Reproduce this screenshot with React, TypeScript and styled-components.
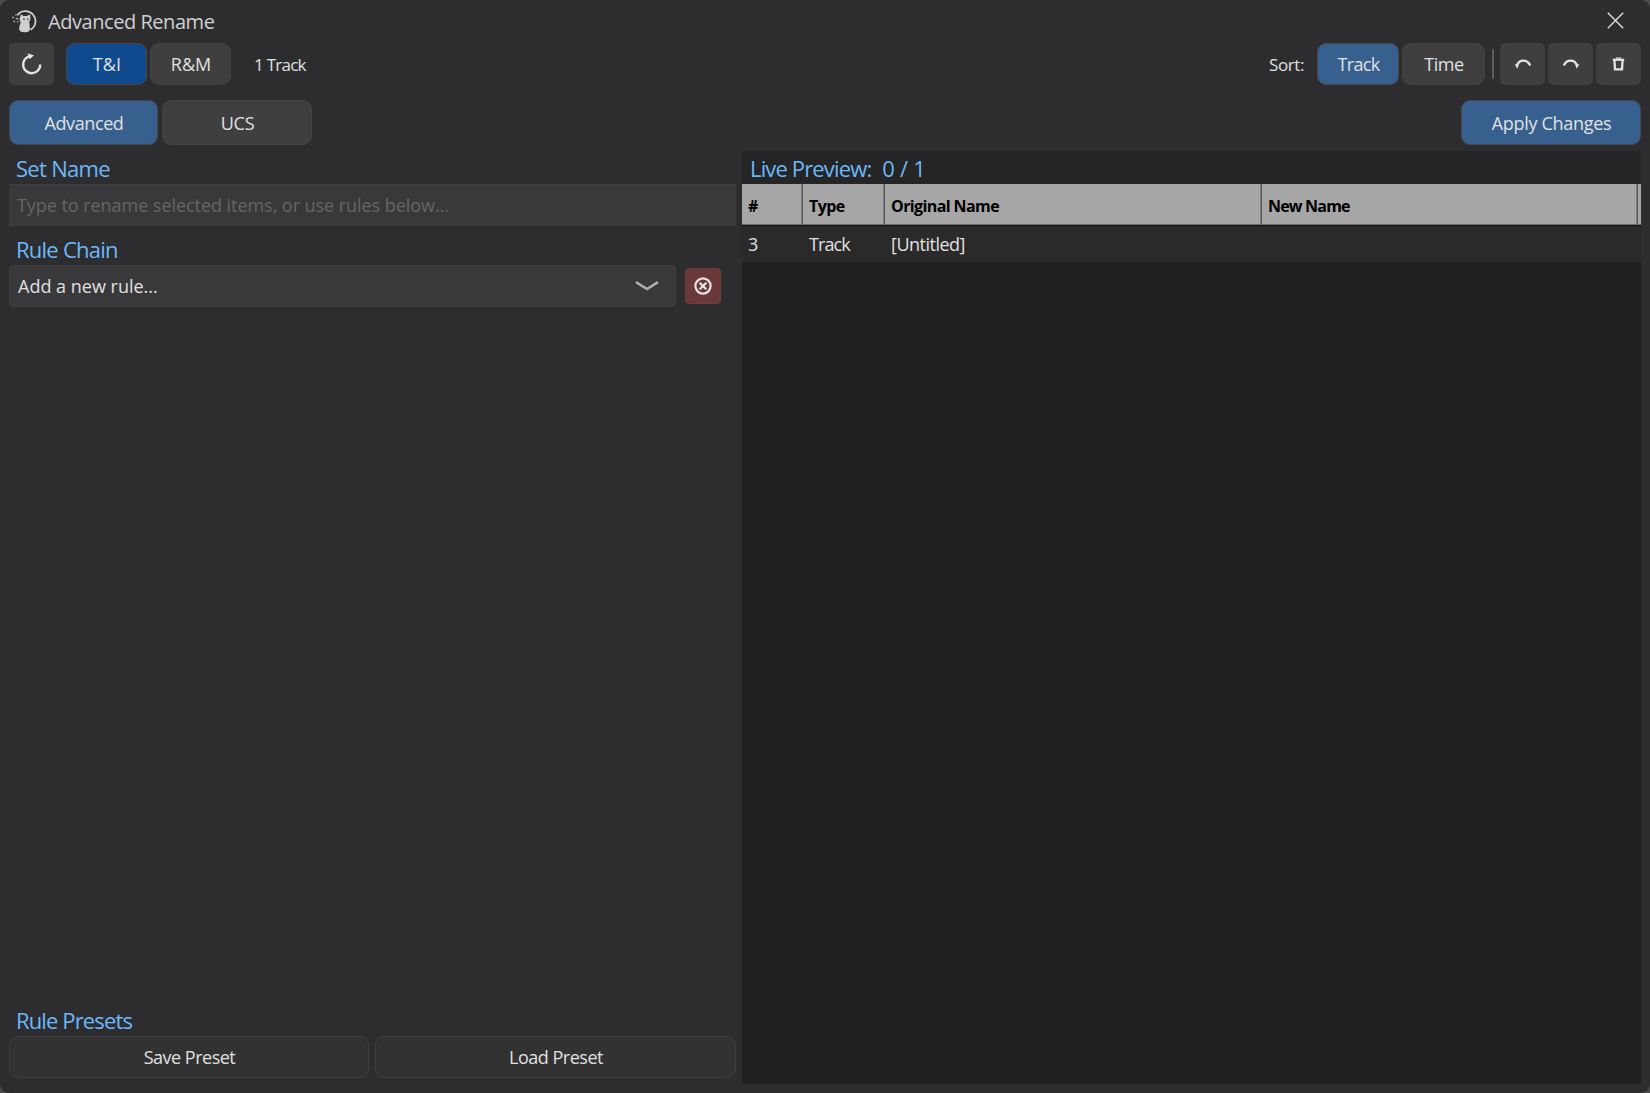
import React from "react";
import styled, { createGlobalStyle } from "styled-components";

const GlobalStyle = createGlobalStyle`
  *, *::before, *::after { box-sizing: border-box; }
  body {
    margin: 0;
    background: #4b4b4b;
    overflow: hidden;
    font-family: "Open Sans", "Noto Sans", sans-serif;
    color: #e0e0e0;
  }
`;

const Window = styled.div`
  display: flex;
  flex-direction: column;
  width: 1650px;
  height: 1093px;
  padding: 0 9px 9px;
  border-radius: 9px;
  background: #2d2d2f;
`;

const Text = styled.span<{ $size?: number; $track?: number; $bold?: boolean }>`
  font-size: ${(p) => p.$size ?? 18}px;
  letter-spacing: ${(p) => p.$track ?? 0}px;
  font-weight: ${(p) => (p.$bold ? 700 : 400)};
  white-space: pre;
`;

const TitleBar = styled.header`
  display: flex;
  align-items: center;
  height: 43px;
  padding: 0 17px 0 2px;
  color: #d0d0d0;
`;

const WindowTitle = styled.h1`
  flex: 1;
  margin: 0 0 0 11px;
  display: flex;
`;

const CloseButton = styled.button`
  display: flex;
  padding: 0;
  margin-bottom: 2px;
  border: 0;
  background: none;
  color: #dedede;
`;

const Toolbar = styled.div`
  display: flex;
  align-items: center;
  height: 42px;
`;

const Spacer = styled.div`
  flex: 1;
`;

const IconButton = styled.button`
  display: flex;
  align-items: center;
  justify-content: center;
  width: 45px;
  height: 42px;
  padding: 0;
  border: 0;
  border-radius: 5px;
  background: #3f3f3f;
  color: #e4e4e4;
`;

const IconGroup = styled.div`
  display: flex;
  gap: 3px;
`;

const ToggleGroup = styled.div<{ $left?: number }>`
  display: flex;
  gap: 3px;
  margin-left: ${(p) => p.$left ?? 0}px;
`;

const fills = { idle: "#3f3f3f", strong: "#0f4a8f", accent: "#37608f" };

const ToggleButton = styled.button<{ $width: number; $height?: number; $fill?: keyof typeof fills }>`
  display: flex;
  align-items: center;
  justify-content: center;
  width: ${(p) => p.$width}px;
  height: ${(p) => p.$height ?? 42}px;
  padding: 0 0 0 1px;
  font-family: inherit;
  color: #e0e0e0;
  border: 1px solid ${(p) => (p.$fill && p.$fill !== "idle" ? "#48484a" : "#424242")};
  border-radius: 9px;
  background: ${(p) => fills[p.$fill ?? "idle"]};
`;

const Status = styled.div`
  display: flex;
  margin-left: 23px;
`;

const SortLabel = styled.div`
  display: flex;
  margin-right: 13px;
`;

const Divider = styled.div`
  width: 2px;
  height: 30px;
  margin: 0 6px 0 7px;
  background: #5c5c5c;
`;

const TabBar = styled.nav`
  display: flex;
  gap: 4px;
  height: 45px;
  margin-top: 15px;
`;

const Main = styled.main`
  display: grid;
  grid-template-columns: 727px 899px;
  column-gap: 6px;
  flex: 1;
  min-height: 0;
  margin-top: 6px;
`;

const Editor = styled.section`
  display: flex;
  flex-direction: column;
  padding-bottom: 6px;
`;

const SectionTitle = styled.h2<{ $height?: number }>`
  display: flex;
  align-items: center;
  height: ${(p) => p.$height ?? 32}px;
  margin: 0;
  padding-left: 7px;
  color: #6cb8fa;
`;

const NameField = styled.div`
  display: flex;
  align-items: center;
  height: 42px;
  margin-bottom: 7px;
  padding-left: 8px;
  border: solid #3e3e40;
  border-width: 1px 0;
  background: #39393b;
  color: #656567;
`;

const RuleRow = styled.div`
  display: flex;
  align-items: center;
  gap: 9px;
`;

const RuleSelect = styled.div`
  display: flex;
  align-items: center;
  justify-content: space-between;
  width: 667px;
  height: 42px;
  padding: 0 16px 0 8px;
  border: 1px solid #3f3f41;
  border-radius: 4px;
  background: #39393b;
`;

const ClearButton = styled.button`
  display: flex;
  align-items: center;
  justify-content: center;
  width: 36px;
  height: 36px;
  padding: 0;
  border: 1px solid #703c3c;
  border-radius: 4px;
  background: #693838;
  color: #e8e2e2;
`;

const PresetRow = styled.div`
  display: grid;
  grid-template-columns: 360px 361px;
  column-gap: 6px;
`;

const PresetButton = styled.button`
  height: 42px;
  padding: 0 0 0 1px;
  font-family: inherit;
  color: #e0e0e0;
  border: 1px solid #3e3e3e;
  border-radius: 9px;
  background: #323232;
`;

const Preview = styled.section`
  display: flex;
  flex-direction: column;
  background: #202020;
`;

const PreviewTitle = styled(SectionTitle)`
  gap: 11px;
  padding-left: 8px;
  background: #252525;
`;

const TableLine = styled.div`
  display: grid;
  grid-template-columns: 61px 82px 377px 376px 3px;
`;

const TableHead = styled(TableLine)`
  height: 42px;
  background: #a6a6a6;
  border-bottom: 1px solid #161616;
  box-shadow: inset 0 -1px 0 #6c6c6c;
  color: #000;
`;

const HeadCell = styled.div`
  display: flex;
  align-items: center;
  padding: 3px 0 0 6px;
  border-right: 1px solid #555;
  box-shadow: inset -1px 0 0 #7d7d7d;

  &:last-child {
    padding: 0;
    border: 0;
    box-shadow: none;
  }
`;

const TableRow = styled(TableLine)`
  height: 36px;
  background: #2a2a2a;
`;

const Cell = styled.div`
  display: flex;
  align-items: center;
  padding-left: 6px;
`;

const Logo = () => (
  <svg width="26" height="25" viewBox="0 0 26 25" fill="none">
    <path d="M6.300 6.300A10 10 0 1 1 19.500 20.700" stroke="#cfcfcf" strokeWidth="1.800" />
    <path
      d="M9.800 5.200 12.600 7h3.400l3-1.800.4 3.600c.2 1.800-.3 3-1.300 4 .5 1.600.7 3 .6 4.600.8 2.700.2 4.900-2.500 5.500-2.200.5-5 .4-6.600-.4-1.700-1.200-1.800-3.700-.9-6 .5-1.500.9-2.500 1-3.500-1-.8-1.300-2.500-.9-3.800Z"
      fill="#cfcfcf"
    />
    <path d="M12 10.200h1.800m2.200.2h1.600" stroke="#444" strokeWidth="1.200" />
    <path d="M1 8.500h2M4.800 9.600h2.400M2.200 12.500h2M6 12.800h1.400M4.200 6h1.400" stroke="#a0a0a0" strokeWidth="1.600" />
  </svg>
);

const CloseIcon = () => (
  <svg width="17" height="17" viewBox="0 0 17 17" fill="none" stroke="currentColor" strokeWidth="1.4">
    <path d="M.8.8l15.400 15.400M16.200.8.8 16.200" />
  </svg>
);

const ResetIcon = () => (
  <svg width="24" height="24" viewBox="0 0 24 24" fill="none">
    <path d="M20.300 12.500a8.600 8.600 0 1 1-11.200-8.100" stroke="currentColor" strokeWidth="2.400" />
    <path d="M7.500 1.600 14 3.200 9.700 7.200Z" fill="currentColor" />
  </svg>
);

const ArcIcon = ({ redo = false }: { redo?: boolean }) => (
  <svg width="18" height="12" viewBox="0 0 18 12" fill="none">
    <g transform={redo ? "matrix(-1 0 0 1 18 0)" : undefined}>
      <path d="M3 7.200C5.500 1.300 13 1 16.200 7.400" stroke="currentColor" strokeWidth="2.300" />
      <path d="M.7 6.200 4.800 6.800 3.300 10.700Z" fill="currentColor" />
    </g>
  </svg>
);

const TrashIcon = () => (
  <svg width="13" height="14" viewBox="0 0 13 14" fill="none" stroke="currentColor">
    <path d="M.8 2.800h11.400" strokeWidth="2.200" />
    <path d="M3.800 1.100h5.400" strokeWidth="1.200" />
    <path d="M2.400 3 3 12.300h7l.6-9.300" strokeWidth="2.300" />
  </svg>
);

const ChevronIcon = () => (
  <svg width="24" height="12" viewBox="0 0 24 12" fill="none">
    <path d="M1 2.100 12 9l11-6.900" stroke="#adadad" strokeWidth="2.600" />
  </svg>
);

const ClearIcon = () => (
  <svg width="18" height="18" viewBox="0 0 18 18" fill="none" stroke="currentColor" strokeWidth="2.300">
    <circle cx="9" cy="9" r="7.600" strokeWidth="2.200" />
    <path d="M5.700 5.700l6.600 6.600M12.300 5.700l-6.600 6.600" />
  </svg>
);

export default function App() {
  return (
    <>
      <GlobalStyle />
      <Window>
        <TitleBar>
          <Logo />
          <WindowTitle>
            <Text $size={20} $track={-0.45}>Advanced Rename</Text>
          </WindowTitle>
          <CloseButton aria-label="Close">
            <CloseIcon />
          </CloseButton>
        </TitleBar>

        <Toolbar>
          <IconButton aria-label="Reset">
            <ResetIcon />
          </IconButton>
          <ToggleGroup $left={12}>
            <ToggleButton $width={81} $fill="strong"><Text $track={0.2}>T&amp;I</Text></ToggleButton>
            <ToggleButton $width={81}><Text>R&amp;M</Text></ToggleButton>
          </ToggleGroup>
          <Status><Text $size={17} $track={-0.75}>1 Track</Text></Status>
          <Spacer />
          <SortLabel><Text $size={17} $track={-0.4}>Sort:</Text></SortLabel>
          <ToggleGroup>
            <ToggleButton $width={82} $fill="accent"><Text $track={-0.65}>Track</Text></ToggleButton>
            <ToggleButton $width={83}><Text $track={-0.4}>Time</Text></ToggleButton>
          </ToggleGroup>
          <Divider />
          <IconGroup>
            <IconButton aria-label="Undo"><ArcIcon /></IconButton>
            <IconButton aria-label="Redo"><ArcIcon redo /></IconButton>
            <IconButton aria-label="Delete"><TrashIcon /></IconButton>
          </IconGroup>
        </Toolbar>

        <TabBar>
          <ToggleButton $width={149} $height={45} $fill="accent"><Text $track={-0.4}>Advanced</Text></ToggleButton>
          <ToggleButton $width={150} $height={45}><Text $track={-0.3}>UCS</Text></ToggleButton>
          <Spacer />
          <ToggleButton $width={180} $height={45} $fill="accent"><Text $track={-0.3}>Apply Changes</Text></ToggleButton>
        </TabBar>

        <Main>
          <Editor>
            <SectionTitle $height={33}><Text $size={22} $track={-0.7}>Set Name</Text></SectionTitle>
            <NameField><Text $track={-0.05}>Type to rename selected items, or use rules below...</Text></NameField>
            <SectionTitle><Text $size={22} $track={-0.75}>Rule Chain</Text></SectionTitle>
            <RuleRow>
              <RuleSelect>
                <Text>Add a new rule...</Text>
                <ChevronIcon />
              </RuleSelect>
              <ClearButton aria-label="Clear rules"><ClearIcon /></ClearButton>
            </RuleRow>
            <Spacer />
            <SectionTitle><Text $size={22} $track={-0.87}>Rule Presets</Text></SectionTitle>
            <PresetRow>
              <PresetButton><Text $track={-0.5}>Save Preset</Text></PresetButton>
              <PresetButton><Text $track={-0.5}>Load Preset</Text></PresetButton>
            </PresetRow>
          </Editor>

          <Preview>
            <PreviewTitle $height={33}>
              <Text $size={22} $track={-0.85}>Live Preview:</Text>
              <Text $size={22} $track={-0.3}>0 / 1</Text>
            </PreviewTitle>
            <TableHead>
              <HeadCell><Text $size={16} $bold>#</Text></HeadCell>
              <HeadCell><Text $size={16} $bold $track={-0.6}>Type</Text></HeadCell>
              <HeadCell><Text $size={16} $bold $track={-0.6}>Original Name</Text></HeadCell>
              <HeadCell><Text $size={16} $bold $track={-0.8}>New Name</Text></HeadCell>
              <HeadCell />
            </TableHead>
            <TableRow>
              <Cell><Text>3</Text></Cell>
              <Cell><Text $track={-0.9}>Track</Text></Cell>
              <Cell><Text $track={-0.5}>[Untitled]</Text></Cell>
            </TableRow>
          </Preview>
        </Main>
      </Window>
    </>
  );
}
